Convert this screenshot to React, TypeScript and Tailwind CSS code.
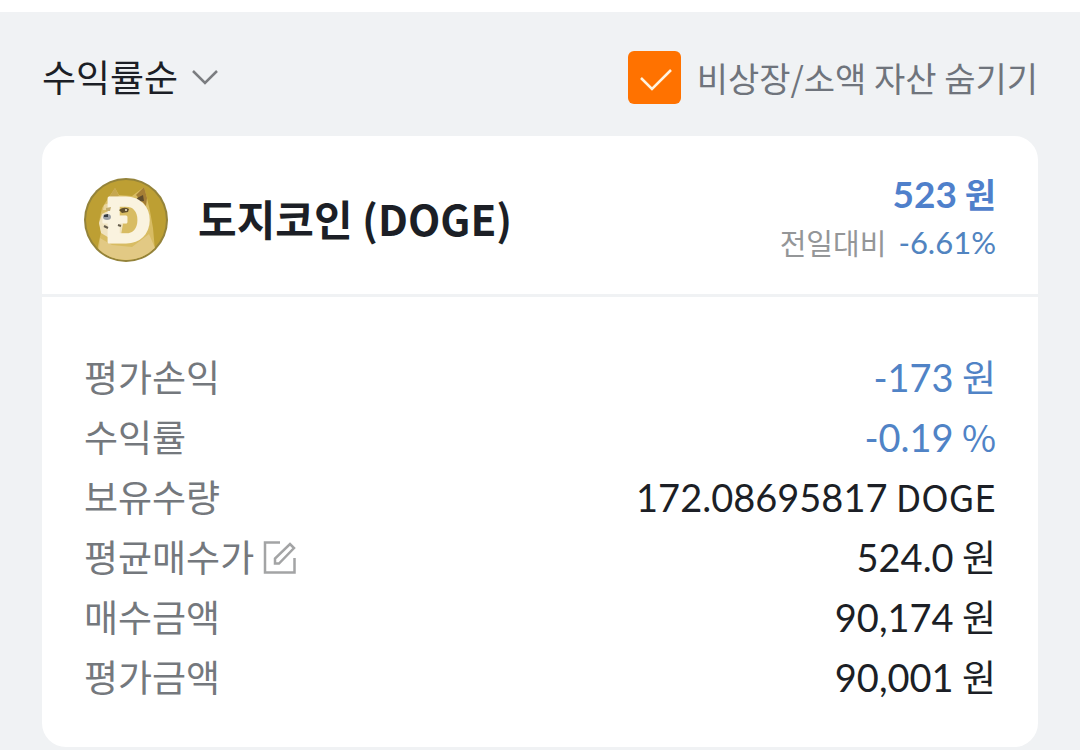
import React, { useState } from 'react';

interface Holding {
  label: string;
  value: string;
  unit: string;
  negative?: boolean;
  editable?: boolean;
}

const holdings: Holding[] = [
  { label: '평가손익', value: '-173', unit: '원', negative: true },
  { label: '수익률', value: '-0.19', unit: '%', negative: true },
  { label: '보유수량', value: '172.08695817', unit: 'DOGE' },
  { label: '평균매수가', value: '524.0', unit: '원', editable: true },
  { label: '매수금액', value: '90,174', unit: '원' },
  { label: '평가금액', value: '90,001', unit: '원' },
];

const DogeLogo: React.FC = () => (
  <svg viewBox="0 0 84 84" className="size-[84px] shrink-0" aria-hidden="true">
    <defs>
      <clipPath id="coin">
        <circle cx="42" cy="42" r="40" />
      </clipPath>
    </defs>
    <circle cx="42" cy="42" r="42" fill="#94833a" />
    <circle cx="42" cy="42" r="40" fill="#bd9f33" />
    <g clipPath="url(#coin)">
      {/* Body and head */}
      <path d="M12 84 L14 68 L17 54 L15 44 L18 30 L23 22 L31 10 L35 17 L48 18 L60 9 L63 20 L66 33 L69 50 L72 84Z" fill="#d8bc63" />
      <path d="M16 60 L28 67 L48 69 L65 56 L71 70 L68 84 L14 84Z" fill="#e2c984" />
      {/* Ears */}
      <path d="M24 21 L31 10 L35 18 L29 22Z" fill="#c6a750" />
      <path d="M52 17 L60 9 L63 20 L62 28Z" fill="#a57e35" />
      <path d="M53 20 L59 17 L60 23 L54 24Z" fill="#604d2d" />
      {/* Muzzle */}
      <path d="M18 36 Q25 31 33 35 L39 46 L37 57 L27 61 L17 55 L15 45Z" fill="#f0e3c0" />
      <path d="M20 27 Q24 24 29 27 L25 32 L19 32Z" fill="#e8d49b" />
    </g>
    <text x="20" y="64" fontSize="60" fontWeight="900" fill="#faf3df" stroke="#faf3df" strokeWidth="3" strokeLinejoin="round" className="font-[Lato]">Ð</text>
    {/* Eyes, nose and mouth */}
    <path d="M35 32 Q40 28 45 31 L44 34 L38 35Z" fill="#62502c" />
    <circle cx="42" cy="32" r="1" fill="#f7edcf" />
    <path d="M22 30 L27 29 L26 33 L22 33Z" fill="#c4ae70" />
    <ellipse cx="23" cy="39" rx="4" ry="3" fill="#9ba0a5" />
    <path d="M20 37 L24 36 L24 39 L20 39Z" fill="#363c42" />
    <path d="M20 48 L24 50 M34 47 L37 48" stroke="#665d4c" strokeWidth="2" />
  </svg>
);

const EditIcon: React.FC = () => (
  <svg viewBox="0 0 34 34" className="size-[34px]" fill="none" stroke="#a3a4a5" strokeWidth="2.5" aria-hidden="true">
    <path d="M18 2.5 H3 V32.5 H32.5 V18" />
    <path d="M13 23.5 V18.5 L28 4 L32 8 L17 23.5Z" />
  </svg>
);

const App: React.FC = () => {
  const [sort, setSort] = useState('profit');
  const [hideSmall, setHideSmall] = useState(true);

  return (
    <div className="min-h-screen border-t-12 border-white bg-[#f0f2f4] px-[42px] font-['Noto_Sans_CJK_KR',sans-serif] text-[#1c1f26]">
      <header className="flex h-[124px] items-center justify-between pt-1.5">
        <div className="relative flex items-center">
          <select
            aria-label="정렬"
            value={sort}
            onChange={(e) => setSort(e.target.value)}
            className="h-[60px] appearance-none bg-transparent pr-10 text-[37px] outline-none"
          >
            <option value="profit">수익률순</option>
          </select>
          <svg viewBox="0 0 28 16" className="pointer-events-none absolute right-0 w-7" fill="none" stroke="#7b7d80" strokeWidth="2.5" aria-hidden="true">
            <path d="M2 2 L14 14 L26 2" />
          </svg>
        </div>

        <label className="flex cursor-pointer items-center gap-4 text-[34px] text-[#6f747c]">
          <span className="relative flex size-[53px]">
            <input
              type="checkbox"
              checked={hideSmall}
              onChange={(e) => setHideSmall(e.target.checked)}
              className="peer size-full appearance-none rounded-md bg-white checked:bg-[#ff7200]"
            />
            <svg viewBox="0 0 53 53" className="pointer-events-none absolute inset-0 hidden peer-checked:block" fill="none" stroke="#fff3df" strokeWidth="2.5" aria-hidden="true">
              <path d="M13 27 L24 38 L43 19" />
            </svg>
          </span>
          비상장/소액 자산 숨기기
        </label>
      </header>

      <section className="rounded-3xl bg-white">
        <div className="flex h-[161px] items-center justify-between border-b-3 border-[#f0f2f4] px-[42px] pt-2.5">
          <div className="flex items-center gap-[30px]">
            <DogeLogo />
            <h1 className="pb-1 text-[42px] leading-[60px] font-bold">도지코인 (DOGE)</h1>
          </div>
          <div className="text-right">
            <p className="text-[34px] leading-[44px] font-bold text-[#4f80cb]">
              <span className="font-[Lato] text-[37px]">523</span> 원
            </p>
            <p className="flex items-center justify-end gap-3 text-[29px] leading-[52px] text-[#949698]">
              전일대비
              <span className="font-[Lato] text-[31px] text-[#5184c0]">-6.61%</span>
            </p>
          </div>
        </div>

        <dl className="px-[42px] pt-[50px] pb-[40px]">
          {holdings.map((item) => (
            <div key={item.label} className="flex h-[60px] items-center justify-between text-[37px]">
              <dt className="flex items-center gap-2 text-[#74787d]">
                {item.label}
                {item.editable && (
                  <button type="button" aria-label="평균매수가 수정">
                    <EditIcon />
                  </button>
                )}
              </dt>
              <dd className={item.negative ? 'text-[#5083c6]' : ''}>
                <span className="font-[Lato] text-[38px]">{item.value}</span> {item.unit}
              </dd>
            </div>
          ))}
        </dl>
      </section>
    </div>
  );
};

export default App;
